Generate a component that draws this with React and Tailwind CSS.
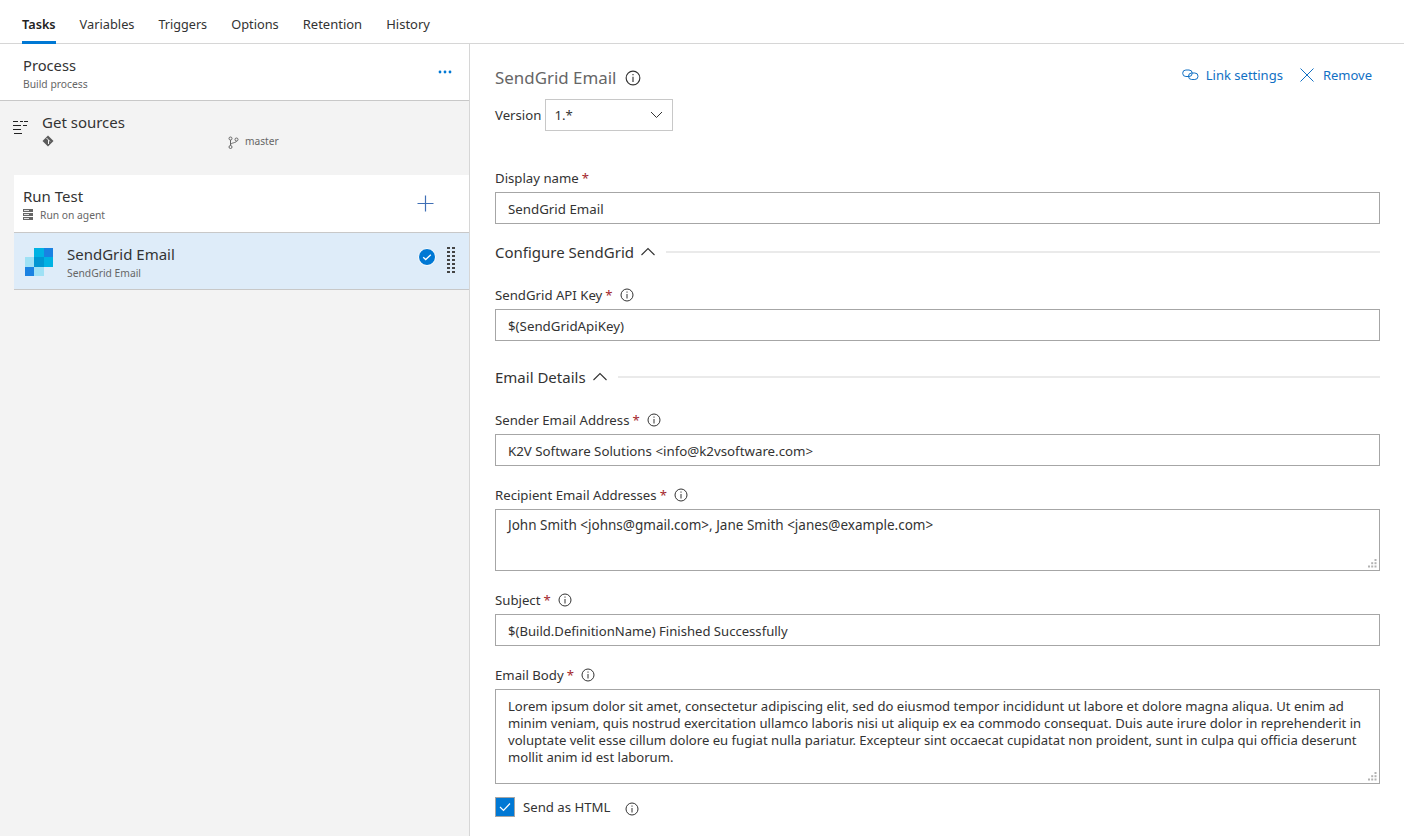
import React from "react";

function Info({ size = 14, className = "" }) {
  return (
    <svg width={size} height={size} viewBox="0 0 14 14" className={className} fill="none" stroke="#333" strokeWidth="1">
      <circle cx="7" cy="7" r="6" />
      <line x1="7" y1="6" x2="7" y2="10.5" />
      <line x1="7" y1="3.5" x2="7" y2="4.7" />
    </svg>
  );
}
function Req() {
  return <span className="text-[#a4262c] ml-[3px]">*</span>;
}
function Label({ text, info }) {
  return (
    <div className="h-5 flex items-center text-[13.2px] leading-5 text-[#333] mb-1">
      <span>{text}</span>
      <Req />
      {info && <Info size={14} className="ml-[7px]" />}
    </div>
  );
}
function Input({ value, size = "text-[13.3px]" }) {
  return (
    <div className={"h-8 border border-[#a6a6a6] bg-white flex items-center px-3 pt-[3px] text-[#333] whitespace-nowrap " + size}>
      {value}
    </div>
  );
}
function Grip() {
  return (
    <svg width="9" height="9" viewBox="0 0 9 9" className="absolute right-[2px] bottom-[2px]" fill="#b3b3b3">
      <rect x="6.5" y="0" width="2" height="2" />
      <rect x="3.2" y="3.2" width="2" height="2" />
      <rect x="6.5" y="3.2" width="2" height="2" />
      <rect x="0" y="6.5" width="2" height="2" />
      <rect x="3.2" y="6.5" width="2" height="2" />
      <rect x="6.5" y="6.5" width="2" height="2" />
    </svg>
  );
}
function Section({ title, className }) {
  return (
    <div className={"h-6 flex items-center " + className}>
      <span className="text-[15px] text-[#333]">{title}</span>
      <svg width="16" height="10" viewBox="0 0 16 10" className="ml-[6px]" fill="none" stroke="#333" strokeWidth="1.1">
        <path d="M1.5 8 L8 1.5 L14.5 8" />
      </svg>
      <div className="flex-1 h-[2px] bg-[#eaeaea] ml-[10px]" />
    </div>
  );
}

export default function App() {
  const tabs = [
    ["Variables", "text-[12.8px]"],
    ["Triggers", "text-[12.6px]"],
    ["Options", "text-[12.8px]"],
    ["Retention", "text-[13px]"],
    ["History", "text-[13px]"],
  ];
  return (
    <div className="w-[1404px] h-[836px] overflow-hidden bg-white flex flex-col font-['Noto_Sans',sans-serif] text-[#333]">
      <div className="h-[44px] shrink-0 border-b border-[#d6d6d6] flex pl-[22px] gap-[24px]">
        <div className="h-[44px] flex items-center font-semibold text-[12.7px] border-b-[3px] border-[#0078d4] pt-[8px] text-[#222]">Tasks</div>
        {tabs.map(([t, size]) => (
          <div key={t} className={"h-[43px] flex items-center pt-[7px] " + size}>{t}</div>
        ))}
      </div>
      <div className="flex-1 flex min-h-0">
        <div className="w-[470px] shrink-0 bg-[#f3f3f3] border-r border-[#d6d6d6] flex flex-col">
          <div className="h-[57px] bg-white border-b border-[#c8c8c8] flex items-center justify-between pl-[23px] pr-[17px]">
            <div className="pt-[2px]">
              <div className="text-[14.7px] leading-5 text-[#333]">Process</div>
              <div className="text-[10.3px] leading-4 text-[#666] mt-[1px]">Build process</div>
            </div>
            <svg width="14" height="4" viewBox="0 0 14 4" fill="#0078d4" className="mb-[1px]">
              <circle cx="2" cy="2" r="1.4" /><circle cx="7" cy="2" r="1.4" /><circle cx="12" cy="2" r="1.4" />
            </svg>
          </div>
          <div className="h-[74px] shrink-0 flex pl-[13px] pt-[11px]">
            <svg width="15" height="14" viewBox="0 0 15 14" className="mt-[8px]" stroke="#222" strokeWidth="1.1" fill="none">
              <path d="M0 1.5H5M7 1.5H10M11 1.5H15M0 5.5H8M10 5.5H14M0 9.5H8M1 13.5H9" />
            </svg>
            <div className="ml-[14px] flex-1">
              <div className="text-[15px] leading-5">Get sources</div>
              <div className="flex items-center h-4 mt-[2px]">
                <svg width="12" height="12" viewBox="0 0 12 12" className="mb-[2px]">
                  <path d="M6 0.5L11.5 6 6 11.5 0.5 6z" fill="#5a5a5a" />
                  <path d="M4.5 3L8 6.5M6.5 5V9" stroke="#f3f3f3" strokeWidth="1" />
                </svg>
                <svg width="11" height="13" viewBox="0 0 11 13" className="ml-[174px]" fill="none" stroke="#666" strokeWidth="1">
                  <circle cx="2.5" cy="2.5" r="1.5" /><circle cx="2.5" cy="11" r="1.5" /><circle cx="8.5" cy="3.5" r="1.5" />
                  <path d="M2.5 4V9.5M8.5 5C8.5 7 2.5 6.5 2.5 9" />
                </svg>
                <span className="ml-[6px] text-[10.2px] text-[#666]">master</span>
              </div>
            </div>
          </div>
          <div className="ml-[14px] h-[58px] shrink-0 bg-white border-b border-[#c8c8c8] flex items-center justify-between pl-[9px] pr-[35px]">
            <div className="pt-[1px]">
              <div className="text-[15px] leading-5 text-[#333]">Run Test</div>
              <div className="flex items-center text-[10.3px] leading-4 text-[#666] mt-[1px]">
                <svg width="10" height="11" viewBox="0 0 10 11" className="mr-[7px]" fill="#666">
                  <path d="M0 0h10v3H0zM0 4h10v3H0zM0 8h10v3H0z" />
                  <path d="M1 1.5h5M1 5.5h5M1 9.5h5" stroke="#fff" strokeWidth=".8" />
                </svg>
                Run on agent
              </div>
            </div>
            <svg width="17" height="17" viewBox="0 0 17 17" stroke="#3f6fb5" strokeWidth="1.2">
              <path d="M8.5 0.5V16.5M0.5 8.5H16.5" />
            </svg>
          </div>
          <div className="ml-[14px] h-[57px] shrink-0 bg-[#deecf9] border-b border-[#c8c8c8] flex items-center pl-[11px] pr-[14px]">
            <svg width="28" height="28" viewBox="0 0 28 28" className="shrink-0 mt-[1px]">
              <rect x="0" y="9" width="9" height="10" fill="#9fe1f5" />
              <rect x="0" y="19" width="9" height="9" fill="#1a82e2" />
              <rect x="9" y="19" width="10" height="9" fill="#9fe1f5" />
              <rect x="9" y="0" width="10" height="9" fill="#00b2e3" />
              <rect x="19" y="0" width="9" height="9" fill="#1a82e2" />
              <rect x="9" y="9" width="10" height="10" fill="#0097d3" />
              <rect x="19" y="9" width="9" height="10" fill="#00b2e3" />
            </svg>
            <div className="ml-[14px] flex-1 pt-[2px]">
              <div className="text-[15px] leading-5">SendGrid Email</div>
              <div className="text-[10.3px] leading-4 text-[#666] pt-[1px]">SendGrid Email</div>
            </div>
            <svg width="18" height="18" viewBox="0 0 18 18" className="mr-[11px] mb-[8px]">
              <circle cx="9" cy="9" r="8.5" fill="#0078d4" stroke="#fff" strokeWidth="1" />
              <path d="M5.2 9.2L7.7 11.5L12.8 6.8" stroke="#fff" strokeWidth="1.3" fill="none" />
            </svg>
            <div className="grid grid-cols-2 gap-x-[2px] gap-y-[2px] w-[8px] mb-[3px]">
              {Array.from({ length: 14 }).map((_, i) => (
                <div key={i} className="w-[3px] h-[2px] bg-[#444]" />
              ))}
            </div>
          </div>
        </div>
        <div className="flex-1 pl-[25px] pr-[24px] min-w-0">
          <div className="h-[43px] pt-[18px] flex justify-between">
            <div className="flex items-center h-[32px]">
              <span className="text-[16.9px] text-[#666]">SendGrid Email</span>
              <Info size={16} className="ml-[9px]" />
            </div>
            <div className="flex items-start text-[13px] text-[#1170c4] pt-[4px] pr-[8px]">
              <div className="flex items-center h-5">
                <svg width="17" height="12" viewBox="0 0 17 12" fill="none" stroke="#1170c4" strokeWidth="1" className="mr-[7px] mb-[3px]">
                  <rect x="0.7" y="1" width="9.5" height="6.5" rx="3.2" />
                  <rect x="6.5" y="4" width="9.5" height="6.5" rx="3.2" />
                </svg>
                Link settings
              </div>
              <div className="flex items-center h-5 ml-[17px]">
                <svg width="14" height="14" viewBox="0 0 14 14" stroke="#1170c4" strokeWidth="1" className="mr-[9px] mb-[3px]">
                  <path d="M0.5 0.5L13.5 13.5M13.5 0.5L0.5 13.5" />
                </svg>
                Remove
              </div>
            </div>
          </div>
          <div className="flex items-center h-8 mt-[12px] text-[13.2px]">
            <span className="pt-[2px]">Version</span>
            <div className="ml-[4px] w-[128px] h-8 border border-[#c8c8c8] flex items-center justify-between pl-[8px] pr-[9px]">
              <span className="pt-[2px]">1.*</span>
              <svg width="13" height="8" viewBox="0 0 13 8" fill="none" stroke="#333" strokeWidth="1"><path d="M1 1L6.5 6.5L12 1" /></svg>
            </div>
          </div>
          <div className="mt-[37px]"><Label text="Display name" /></div>
          <Input value="SendGrid Email" />
          <Section title="Configure SendGrid" className="mt-4" />
          <div className="mt-[21px]"><Label text="SendGrid API Key" info /></div>
          <Input value="$(SendGridApiKey)" />
          <Section title="Email Details" className="mt-6" />
          <div className="mt-[21px]"><Label text="Sender Email Address" info /></div>
          <Input value="K2V Software Solutions <info@k2vsoftware.com>" />
          <div className="mt-[19px]"><Label text="Recipient Email Addresses" info /></div>
          <div className="relative h-[62px] border border-[#a6a6a6] px-3 pt-[6px] text-[13.5px] leading-[18px]">
            John Smith &lt;johns@gmail.com&gt;, Jane Smith &lt;janes@example.com&gt;
            <Grip />
          </div>
          <div className="mt-[19px]"><Label text="Subject" info /></div>
          <Input value="$(Build.DefinitionName) Finished Successfully" size="text-[13.1px]" />
          <div className="mt-[19px]"><Label text="Email Body" info /></div>
          <div className="relative h-[95px] border border-[#a6a6a6] px-3 pt-[8px] text-[13.1px] leading-[17px] whitespace-nowrap">
            Lorem ipsum dolor sit amet, consectetur adipiscing elit, sed do eiusmod tempor incididunt ut labore et dolore magna aliqua. Ut enim ad<br />
            minim veniam, quis nostrud exercitation ullamco laboris nisi ut aliquip ex ea commodo consequat. Duis aute irure dolor in reprehenderit in<br />
            voluptate velit esse cillum dolore eu fugiat nulla pariatur. Excepteur sint occaecat cupidatat non proident, sunt in culpa qui officia deserunt<br />
            mollit anim id est laborum.
            <Grip />
          </div>
          <div className="flex items-center mt-[13px] text-[13.2px]">
            <div className="w-5 h-5 bg-[#0078d4] border border-[#a6a6a6] flex items-center justify-center">
              <svg width="12" height="10" viewBox="0 0 12 10" fill="none" stroke="#fff" strokeWidth="1.2"><path d="M1 5L4.5 8.5L11 1.5" /></svg>
            </div>
            <span className="ml-2 pt-[1px]">Send as HTML</span>
            <Info size={14} className="ml-[14px] mt-[3px]" />
          </div>
        </div>
      </div>
    </div>
  );
}
